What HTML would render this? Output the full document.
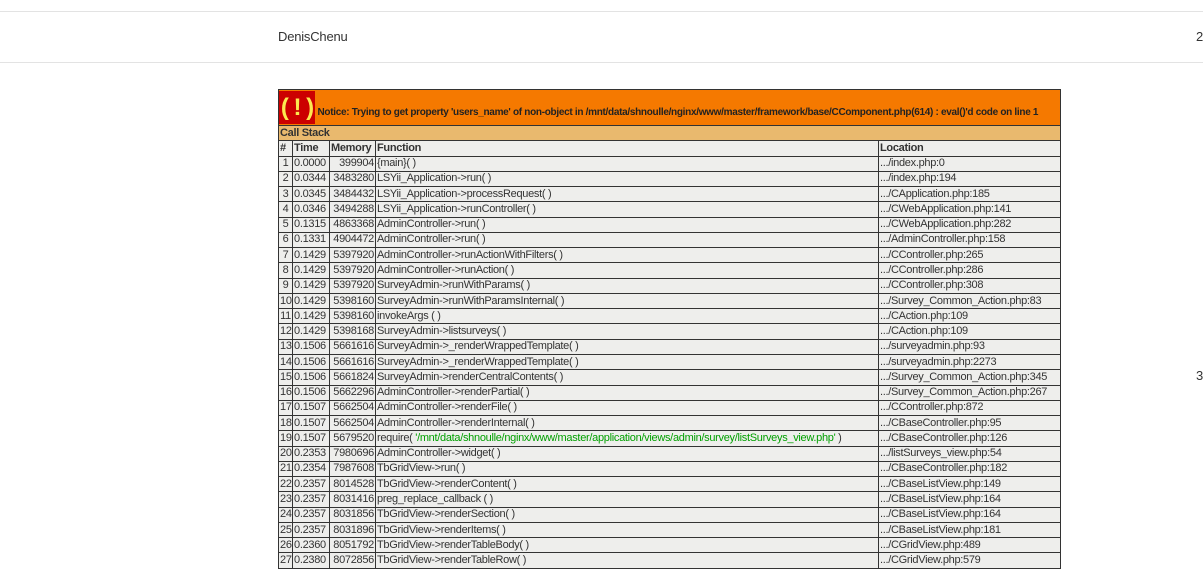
<!DOCTYPE html>
<html><head><meta charset="utf-8"><style>
body{margin:0;width:1203px;height:566px;overflow:hidden;background:#fff;font-family:"Liberation Sans",sans-serif;position:relative}
.l1{position:absolute;left:0;top:11px;width:1203px;height:1px;background:#e3e3e3}
.l2{position:absolute;left:0;top:62px;width:1203px;height:1px;background:#e3e3e3}
.name{position:absolute;left:278px;top:29px;font-size:13px;color:#333;letter-spacing:-0.2px}
.n2{position:absolute;left:1196px;top:29px;font-size:13px;color:#333}
.n3{position:absolute;left:1196px;top:368px;font-size:13px;color:#333}
table{position:absolute;left:278px;top:89px;width:783px;border-collapse:collapse;table-layout:fixed;font-size:11px;letter-spacing:-0.3px;color:#333}
td,th{border:1px solid #333;padding:0 1px;height:14.27px;line-height:13px;white-space:nowrap;overflow:hidden;background:#eeeeec;text-align:left;font-weight:normal}
th{font-weight:bold}
.r{text-align:right}
.c{text-align:center}
.notice td{background:#f57900;height:35px;padding:0;font-weight:bold;font-size:10px;color:#222;letter-spacing:-0.3px}
.bang{display:inline-block;background:#cc0000;color:#fce94f;font-size:24px;font-weight:bold;height:33px;line-height:33px;padding:0;vertical-align:middle;letter-spacing:-1px;width:36px;text-align:center}
.nt{position:relative;top:5px}
.cs th{background:#e9b96e}
.g{color:#00a000}
</style></head><body>
<div class="l1"></div><div class="l2"></div>
<div class="name">DenisChenu</div><div class="n2">2</div><div class="n3">3</div>
<table>
<colgroup><col style="width:14px"><col style="width:37px"><col style="width:46px"><col style="width:503px"><col style="width:182px"></colgroup>
<tr class="notice"><td colspan="5"><span class="bang">( ! )</span> <span class="nt">Notice: Trying to get property 'users_name' of non-object in /mnt/data/shnoulle/nginx/www/master/framework/base/CComponent.php(614) : eval()'d code on line 1</span></td></tr>
<tr class="cs"><th colspan="5">Call Stack</th></tr>
<tr><th>#</th><th>Time</th><th>Memory</th><th>Function</th><th>Location</th></tr>
<tr><td class="c">1</td><td>0.0000</td><td class="r">399904</td><td>{main}( )</td><td>.../index.php:0</td></tr>
<tr><td class="c">2</td><td>0.0344</td><td class="r">3483280</td><td>LSYii_Application-&gt;run( )</td><td>.../index.php:194</td></tr>
<tr><td class="c">3</td><td>0.0345</td><td class="r">3484432</td><td>LSYii_Application-&gt;processRequest( )</td><td>.../CApplication.php:185</td></tr>
<tr><td class="c">4</td><td>0.0346</td><td class="r">3494288</td><td>LSYii_Application-&gt;runController( )</td><td>.../CWebApplication.php:141</td></tr>
<tr><td class="c">5</td><td>0.1315</td><td class="r">4863368</td><td>AdminController-&gt;run( )</td><td>.../CWebApplication.php:282</td></tr>
<tr><td class="c">6</td><td>0.1331</td><td class="r">4904472</td><td>AdminController-&gt;run( )</td><td>.../AdminController.php:158</td></tr>
<tr><td class="c">7</td><td>0.1429</td><td class="r">5397920</td><td>AdminController-&gt;runActionWithFilters( )</td><td>.../CController.php:265</td></tr>
<tr><td class="c">8</td><td>0.1429</td><td class="r">5397920</td><td>AdminController-&gt;runAction( )</td><td>.../CController.php:286</td></tr>
<tr><td class="c">9</td><td>0.1429</td><td class="r">5397920</td><td>SurveyAdmin-&gt;runWithParams( )</td><td>.../CController.php:308</td></tr>
<tr><td class="c">10</td><td>0.1429</td><td class="r">5398160</td><td>SurveyAdmin-&gt;runWithParamsInternal( )</td><td>.../Survey_Common_Action.php:83</td></tr>
<tr><td class="c">11</td><td>0.1429</td><td class="r">5398160</td><td>invokeArgs ( )</td><td>.../CAction.php:109</td></tr>
<tr><td class="c">12</td><td>0.1429</td><td class="r">5398168</td><td>SurveyAdmin-&gt;listsurveys( )</td><td>.../CAction.php:109</td></tr>
<tr><td class="c">13</td><td>0.1506</td><td class="r">5661616</td><td>SurveyAdmin-&gt;_renderWrappedTemplate( )</td><td>.../surveyadmin.php:93</td></tr>
<tr><td class="c">14</td><td>0.1506</td><td class="r">5661616</td><td>SurveyAdmin-&gt;_renderWrappedTemplate( )</td><td>.../surveyadmin.php:2273</td></tr>
<tr><td class="c">15</td><td>0.1506</td><td class="r">5661824</td><td>SurveyAdmin-&gt;renderCentralContents( )</td><td>.../Survey_Common_Action.php:345</td></tr>
<tr><td class="c">16</td><td>0.1506</td><td class="r">5662296</td><td>AdminController-&gt;renderPartial( )</td><td>.../Survey_Common_Action.php:267</td></tr>
<tr><td class="c">17</td><td>0.1507</td><td class="r">5662504</td><td>AdminController-&gt;renderFile( )</td><td>.../CController.php:872</td></tr>
<tr><td class="c">18</td><td>0.1507</td><td class="r">5662504</td><td>AdminController-&gt;renderInternal( )</td><td>.../CBaseController.php:95</td></tr>
<tr><td class="c">19</td><td>0.1507</td><td class="r">5679520</td><td>require( <span class="g">'/mnt/data/shnoulle/nginx/www/master/application/views/admin/survey/listSurveys_view.php'</span> )</td><td>.../CBaseController.php:126</td></tr>
<tr><td class="c">20</td><td>0.2353</td><td class="r">7980696</td><td>AdminController-&gt;widget( )</td><td>.../listSurveys_view.php:54</td></tr>
<tr><td class="c">21</td><td>0.2354</td><td class="r">7987608</td><td>TbGridView-&gt;run( )</td><td>.../CBaseController.php:182</td></tr>
<tr><td class="c">22</td><td>0.2357</td><td class="r">8014528</td><td>TbGridView-&gt;renderContent( )</td><td>.../CBaseListView.php:149</td></tr>
<tr><td class="c">23</td><td>0.2357</td><td class="r">8031416</td><td>preg_replace_callback ( )</td><td>.../CBaseListView.php:164</td></tr>
<tr><td class="c">24</td><td>0.2357</td><td class="r">8031856</td><td>TbGridView-&gt;renderSection( )</td><td>.../CBaseListView.php:164</td></tr>
<tr><td class="c">25</td><td>0.2357</td><td class="r">8031896</td><td>TbGridView-&gt;renderItems( )</td><td>.../CBaseListView.php:181</td></tr>
<tr><td class="c">26</td><td>0.2360</td><td class="r">8051792</td><td>TbGridView-&gt;renderTableBody( )</td><td>.../CGridView.php:489</td></tr>
<tr><td class="c">27</td><td>0.2380</td><td class="r">8072856</td><td>TbGridView-&gt;renderTableRow( )</td><td>.../CGridView.php:579</td></tr>
</table>
</body></html>
